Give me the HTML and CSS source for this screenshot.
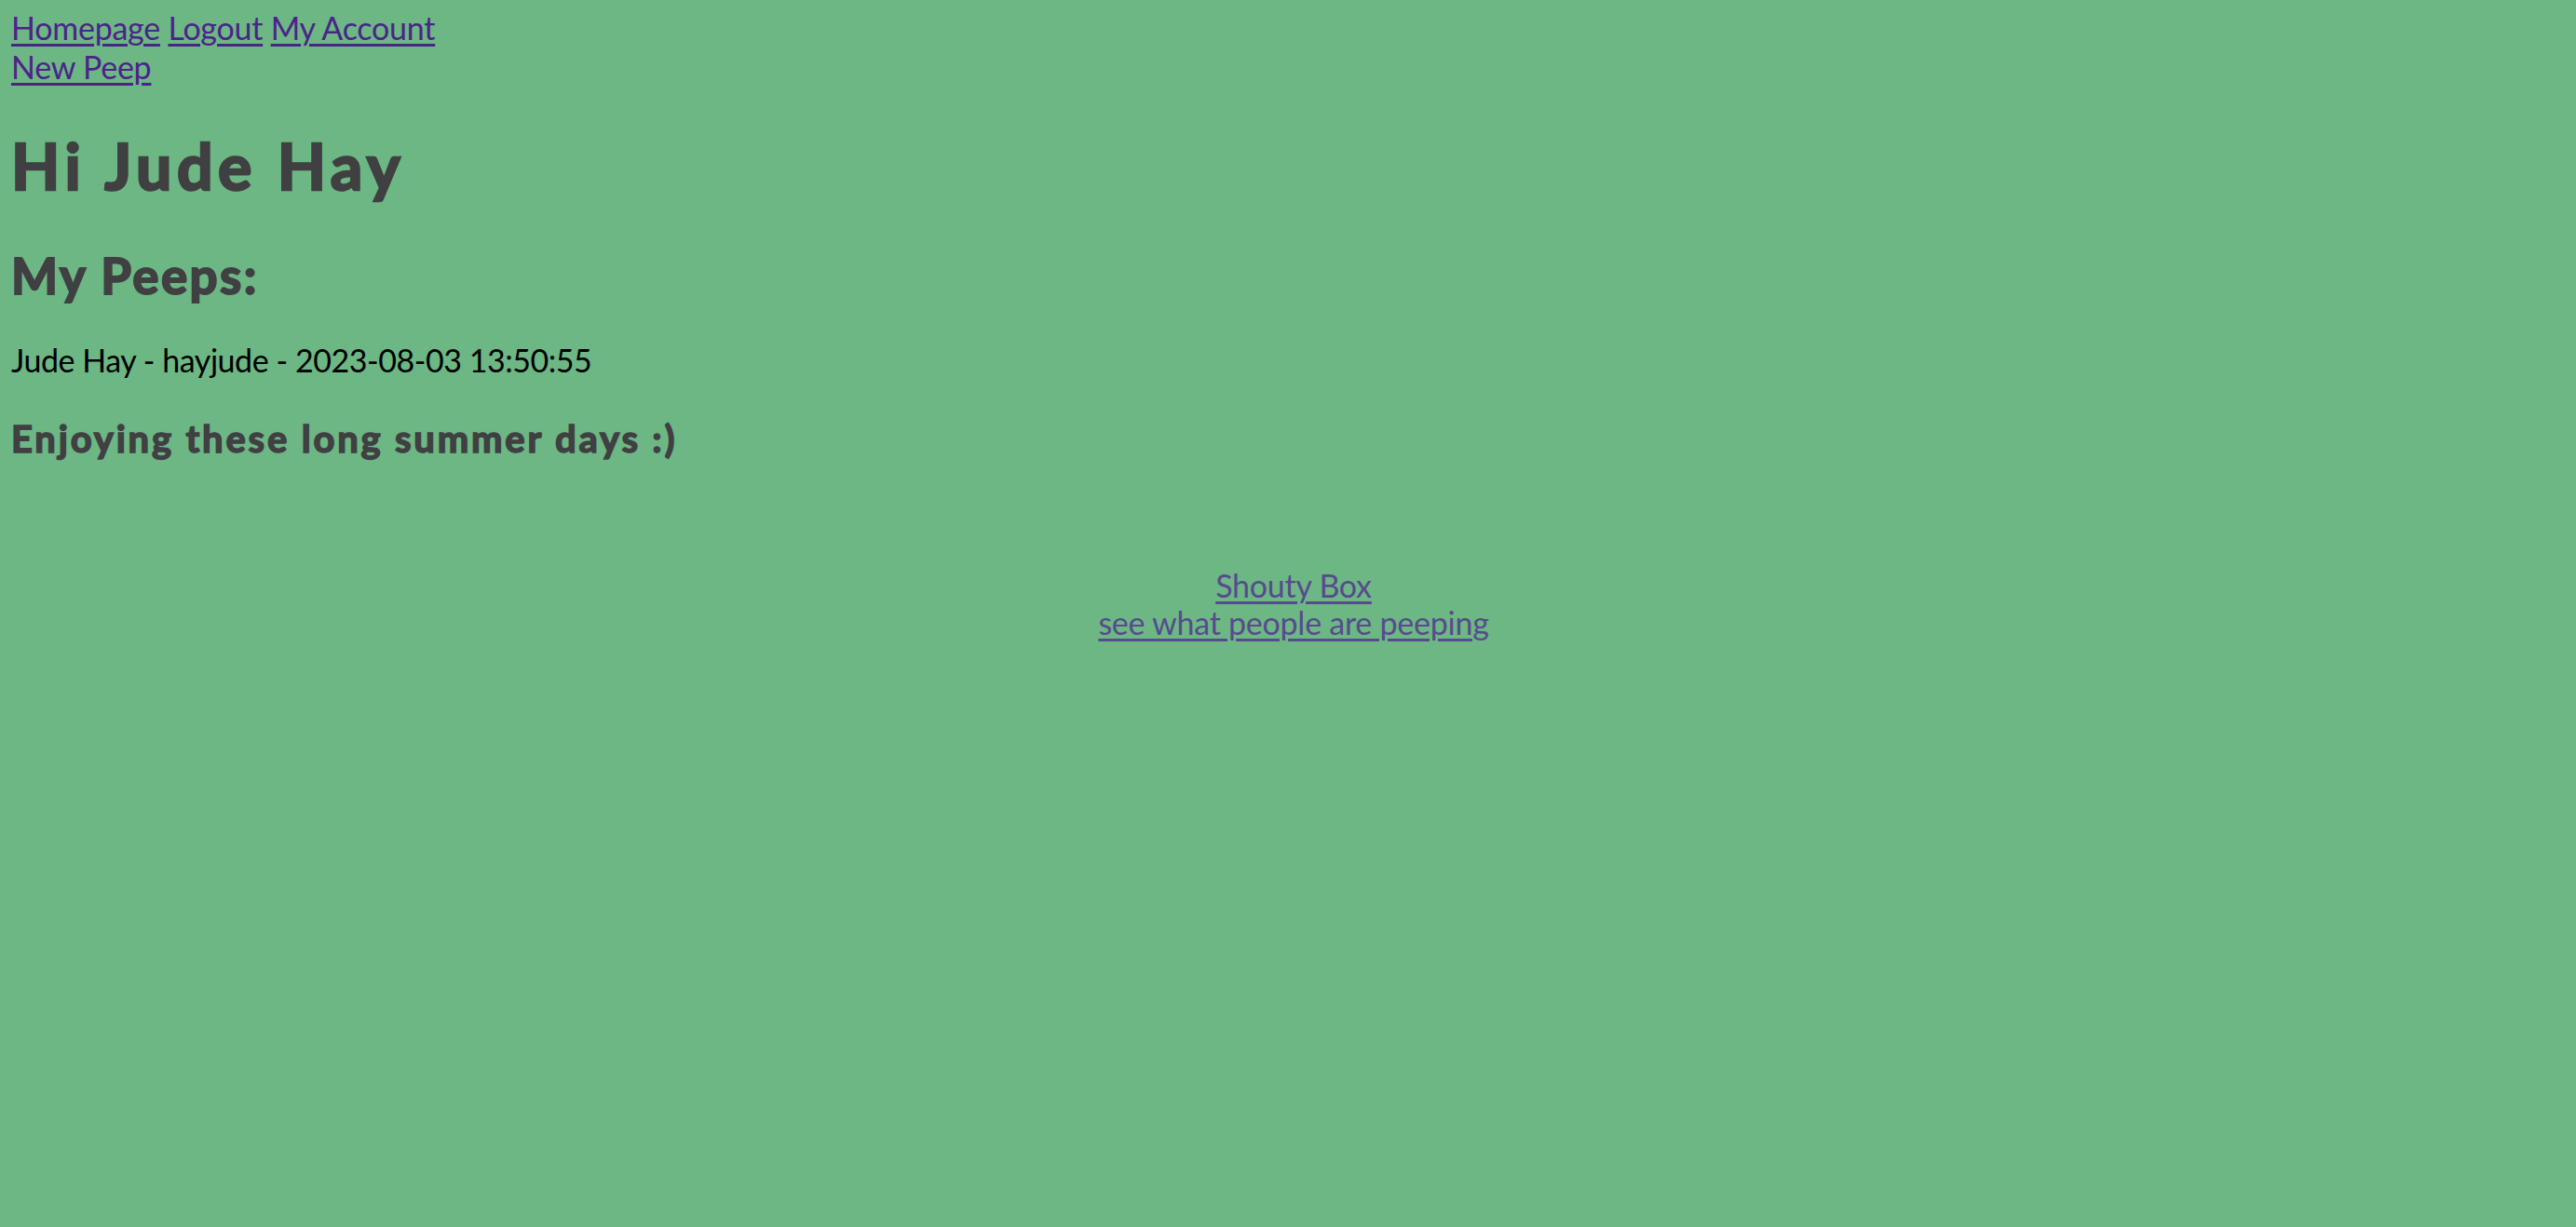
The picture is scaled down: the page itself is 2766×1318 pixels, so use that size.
FILE: index.html
```html
<!DOCTYPE html>
<html lang="en">
<head>
<meta charset="utf-8">
<title>Chitter</title>
<link rel="stylesheet" href="styles.css">
</head>
<body>
<nav class="nav">
  <div class="nav-row"><a class="nav-link" href="#">Homepage</a> <a class="nav-link" href="#">Logout</a> <a class="nav-link" href="#">My Account</a></div>
  <div class="nav-row"><a class="nav-link" href="#">New Peep</a></div>
</nav>
<h1 class="greeting">Hi Jude Hay</h1>
<h2 class="section-title">My Peeps:</h2>
<p class="peep-meta">Jude Hay - hayjude - 2023-08-03 13:50:55</p>
<h3 class="peep-body">Enjoying these long summer days :)</h3>
<footer class="footer">
  <a class="footer-link" href="#">Shouty Box</a><br>
  <a class="footer-link" href="#">see what people are peeping</a>
</footer>
</body>
</html>
```
FILE: styles.css
```css
html, body {
  background: #6cb784;
}
body {
  margin: 0;
  padding: 9px 12px;
  font-family: "Lato", "Noto Sans", sans-serif;
  font-size: 34px;
  color: #000;
}
.nav-row {
  line-height: 42px;
  letter-spacing: -0.25px;
}
.nav-link {
  color: #4b2489;
  text-decoration: underline;
  text-decoration-thickness: 3px;
  text-underline-offset: 4px;
}
.greeting {
  font-size: 68px;
  line-height: 82px;
  font-weight: 700;
  letter-spacing: 5.5px;
  -webkit-text-stroke: 2.5px #404042;
  color: #404042;
  margin: 44px 0 0;
}
.section-title {
  font-size: 53px;
  line-height: 64px;
  font-weight: 700;
  letter-spacing: 2.4px;
  -webkit-text-stroke: 2px #404042;
  color: #404042;
  margin: 45px 0 0;
}
.peep-meta {
  font-size: 34px;
  line-height: 42px;
  letter-spacing: -0.45px;
  margin: 38px 0 0;
}
.peep-body {
  font-size: 40px;
  line-height: 48px;
  font-weight: 700;
  letter-spacing: 2.8px;
  -webkit-text-stroke: 1.5px #404042;
  color: #404042;
  margin: 39px 0 0;
}
.footer {
  text-align: center;
  line-height: 40px;
  letter-spacing: -0.25px;
  margin-top: 114px;
  padding-left: 12px;
}
.footer-link {
  color: #574b8d;
  text-decoration: underline;
  text-decoration-thickness: 3px;
  text-underline-offset: 4px;
}
```
